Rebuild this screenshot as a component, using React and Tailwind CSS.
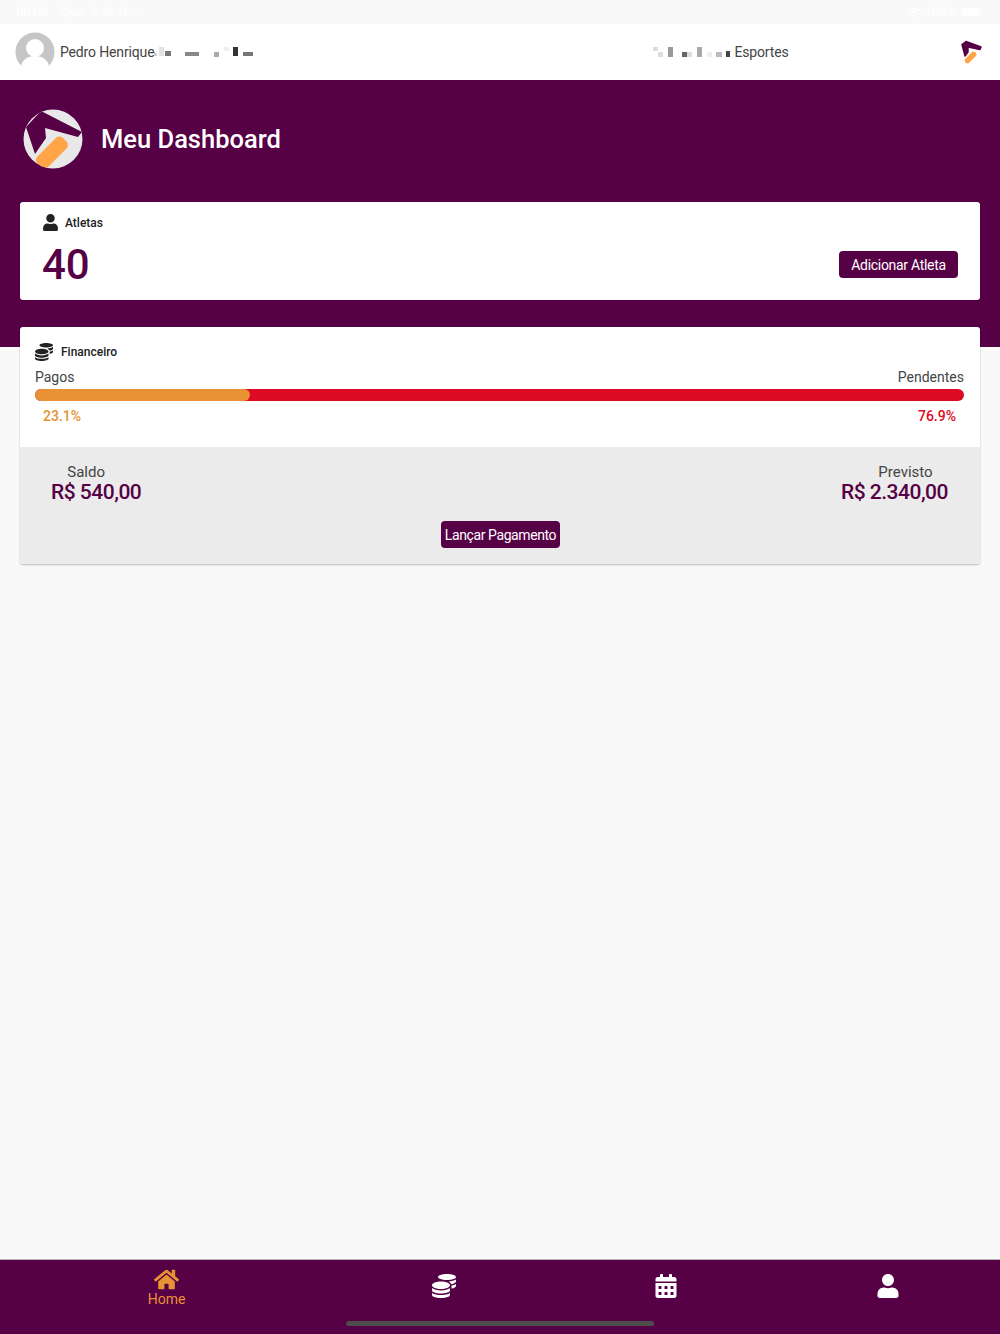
import { FaUser, FaCoins, FaHome, FaCalendarAlt, FaWifi } from 'react-icons/fa';

// blocos do borrado: [largura, altura, cor, margem esquerda, topo]
const MOSAIC_NAME = [
  [3, 3, '#cccccc', 0, 6], [5, 9, '#e2e2e2', 2, 0], [6, 5, '#777777', 1, 4], [14, 4, '#888888', 14, 5],
  [5, 5, '#aaaaaa', 15, 5], [5, 4, '#eeeeee', 5, 0], [5, 9, '#333333', 4, 0], [10, 4, '#777777', 5, 5],
];
const MOSAIC_CLUB = [
  [5, 4, '#dddddd', 0, 0], [5, 5, '#dddddd', 0, 5], [5, 10, '#999999', 5, 0], [5, 5, '#666666', 9, 5],
  [5, 5, '#dddddd', 0, 5], [5, 10, '#aaaaaa', 5, 0], [5, 5, '#eeeeee', 5, 5], [6, 5, '#bbbbbb', 4, 5],
  [4, 6, '#444444', 4, 4],
];

function Mosaic({ blocks }) {
  return (
    <div className="flex h-[10px] items-start">
      {blocks.map(([w, h, color, ml, mt], i) => (
        <div key={i} style={{ width: w, height: h, background: color, marginLeft: ml, marginTop: mt }} />
      ))}
    </div>
  );
}

function Avatar() {
  return (
    <svg width="40" height="40" viewBox="0 0 40 40">
      <defs>
        <clipPath id="av"><circle cx="20" cy="20" r="19.5" /></clipPath>
      </defs>
      <g clipPath="url(#av)">
        <rect width="40" height="34" fill="#c6c6c6" />
        <circle cx="20" cy="16" r="9" fill="#ffffff" />
        <ellipse cx="20" cy="35" rx="14" ry="11" fill="#ffffff" />
      </g>
    </svg>
  );
}

function LogoBig() {
  return (
    <svg width="60" height="60" viewBox="0 0 60 60">
      <defs>
        <clipPath id="lg"><circle cx="30" cy="30" r="29.5" /></clipPath>
      </defs>
      <g clipPath="url(#lg)">
        <rect width="60" height="60" fill="#e8e8e8" />
        <polygon points="18,2 59,23 55,28 22,19 23,29 12,45 3,18" fill="#560046" />
        <rect x="11" y="36" width="36" height="15" rx="5" transform="rotate(-45 29 43.5)" fill="#ffa447" />
      </g>
    </svg>
  );
}

function LogoSmall() {
  return (
    <svg width="24" height="25" viewBox="0 0 24 25">
      <path d="M2 4.5 L6 1.5 L21 7 L20 9.5 L8 7 L8 12 L5 16 Z" fill="#560046" stroke="#560046" strokeWidth="1.5" strokeLinejoin="round" />
      <path d="M7.5 20.5 L13.5 14.5" fill="none" stroke="#ffa447" strokeWidth="5.5" strokeLinecap="round" />
    </svg>
  );
}

export default function App() {
  return (
    <div className="flex h-screen flex-col overflow-hidden bg-[#f9f9f9] font-['Roboto',sans-serif]">
      {/* status bar */}
      <div className="flex h-6 items-center justify-between pl-4 pr-[19px] text-[13px] text-white">
        <div className="flex gap-3">
          <span>00:08</span>
          <span>Qua. 9 de fev.</span>
        </div>
        <div className="flex items-center gap-[5px]">
          <FaWifi size={13} />
          <span>100%</span>
          <div className="h-2 w-5 rounded-sm bg-white" />
        </div>
      </div>

      {/* header */}
      <div className="flex h-14 items-center bg-white pl-[15px] pr-4 text-sm tracking-[-0.15px] text-[#444444]">
        <Avatar />
        <span className="ml-[5px]">Pedro Henrique</span>
        <Mosaic blocks={MOSAIC_NAME} />
        <div className="ml-[400px]"><Mosaic blocks={MOSAIC_CLUB} /></div>
        <span className="ml-[4px]">Esportes</span>
        <div className="ml-auto"><LogoSmall /></div>
      </div>

      {/* topo roxo */}
      <div className="bg-[#560046] px-5 pb-[47px]">
        <div className="mb-1 flex h-[118px] items-center gap-[18px] pl-[3px]">
          <LogoBig />
          <h1 className="text-[25.5px] font-medium text-white">Meu Dashboard</h1>
        </div>
        <div className="flex h-[98px] justify-between rounded-[3px] bg-white pl-[22px] pr-[22px]">
          <div>
            <div className="mt-3 flex items-center gap-[6px] text-xs font-medium text-[#222222]">
              <FaUser size={17} />
              <span>Atletas</span>
            </div>
            <div className="mt-[9px] text-[42px] font-medium leading-[50px] text-[#560046]">40</div>
          </div>
          <button className="mt-[49px] h-[27px] w-[119px] rounded bg-[#560046] text-sm tracking-[-0.3px] text-white">
            Adicionar Atleta
          </button>
        </div>
      </div>

      {/* financeiro */}
      <div className="-mt-5 px-5">
        <div className="overflow-hidden rounded-[3px] bg-white shadow-[0_1px_2px_rgba(0,0,0,0.25)]">
          <div className="h-[120px] px-[15px] pr-4">
            <div className="flex items-center gap-2 pt-4 text-xs font-medium text-[#222222]">
              <FaCoins size={18} />
              <span>Financeiro</span>
            </div>
            <div className="mt-[6px] flex justify-between text-sm text-[#444444]">
              <span>Pagos</span>
              <span>Pendentes</span>
            </div>
            <div className="mt-[2px] h-3 overflow-hidden rounded-full bg-[#dc0a25]">
              <div className="h-full w-[23.1%] rounded-full bg-[#e89135]" />
            </div>
            <div className="mt-[5px] flex justify-between px-2 text-sm font-medium">
              <span className="text-[#e89135]">23.1%</span>
              <span className="text-[#dc0a25]">76.9%</span>
            </div>
          </div>
          <div className="h-[117px] bg-[#ebebeb] pl-[31px] pr-[32px] pt-[17px]">
            <div className="flex justify-between">
              <div className="text-center">
                <div className="pr-5 text-[15px] leading-[17px] text-[#444444]">Saldo</div>
                <div className="text-[21px] font-medium leading-[22px] tracking-[-0.5px] text-[#560046]">R$ 540,00</div>
              </div>
              <div className="text-center">
                <div className="pl-[22px] text-[15px] leading-[17px] text-[#444444]">Previsto</div>
                <div className="text-[21px] font-medium leading-[22px] tracking-[-0.5px] text-[#560046]">R$ 2.340,00</div>
              </div>
            </div>
            <div className="mt-[18px] flex justify-center pl-[2px]">
              <button className="h-[27px] w-[119px] rounded bg-[#560046] text-sm tracking-[-0.4px] text-white">
                Lançar Pagamento
              </button>
            </div>
          </div>
        </div>
      </div>

      {/* tab bar */}
      <div className="relative mt-auto h-[75px] border-t border-[#b5b5b5] bg-[#560046]">
        <div className="grid h-full grid-cols-[333px_222px_222px_222px] text-white">
          <div className="flex flex-col items-center pt-[7px] text-[#e89135]">
            <FaHome size={25} />
            <span className="text-sm leading-[15px]">Home</span>
          </div>
          <div className="flex justify-center pt-[14px]"><FaCoins size={24} /></div>
          <div className="flex justify-center pt-[14px]"><FaCalendarAlt size={24} /></div>
          <div className="flex justify-center pt-[14px]"><FaUser size={24} /></div>
        </div>
        <div className="absolute bottom-2 left-1/2 h-[5px] w-[308px] -translate-x-1/2 rounded-full bg-[#4d4d4d]" />
      </div>
    </div>
  );
}
